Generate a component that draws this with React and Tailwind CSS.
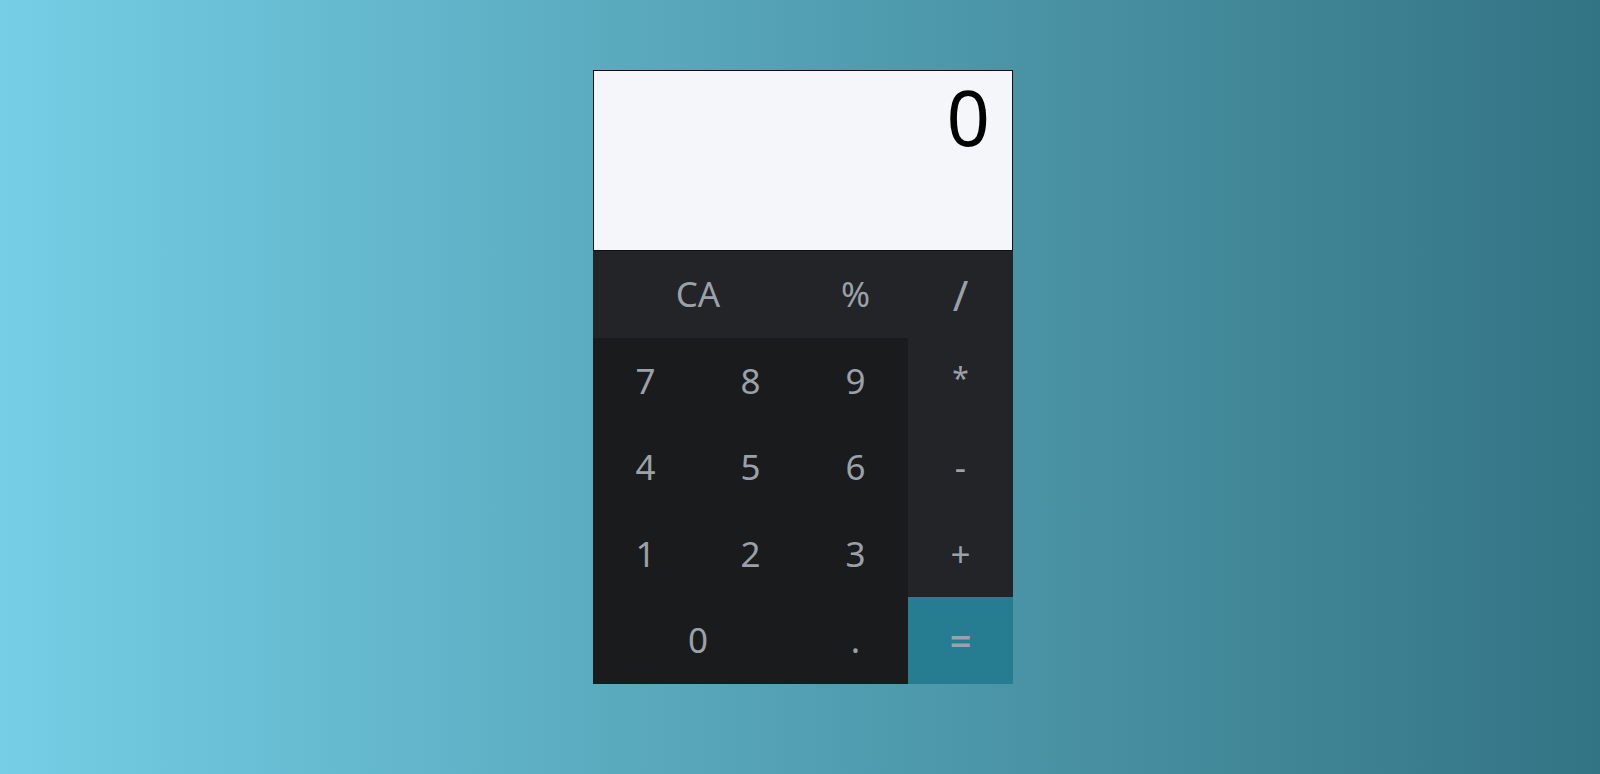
export default function App() {
  const font = { fontFamily: '"Noto Sans", "Open Sans", sans-serif' };
  const num = "flex items-center justify-center bg-[#1a1b1d] text-[35px] text-[#9aa1a8]";
  const op = "flex items-center justify-center bg-[#232428] text-[35px] text-[#9aa1a8]";
  return (
    <div
      className="w-full h-[774px] flex justify-center bg-gradient-to-r from-[#74cee5] to-[#337484]"
      style={font}
    >
      <div className="ml-[6px] mt-[70px] w-[420px] flex flex-col">
        <div className="h-[181px] bg-[#f4f6fa] border border-[#111] flex justify-end items-start pt-[8px] pr-[22px]">
          <span className="text-[76px] leading-none text-black">0</span>
        </div>
        <div className="grid grid-cols-4 grid-rows-5 h-[433px]">
          <div className={op + " col-span-2"}>CA</div>
          <div className={op}>%</div>
          <div className={op}><span className="text-[42px]">/</span></div>
          <div className={num}>7</div>
          <div className={num}>8</div>
          <div className={num}>9</div>
          <div className={op}><span className="text-[30px] -mt-[6px]">*</span></div>
          <div className={num}>4</div>
          <div className={num}>5</div>
          <div className={num}>6</div>
          <div className={op}>-</div>
          <div className={num}>1</div>
          <div className={num}>2</div>
          <div className={num}>3</div>
          <div className={op}>+</div>
          <div className={num + " col-span-2"}>0</div>
          <div className={num}>.</div>
          <div className="flex items-center justify-center bg-[#267d92] text-[38px] font-semibold text-[#9aa1a8]">=</div>
        </div>
      </div>
    </div>
  );
}
